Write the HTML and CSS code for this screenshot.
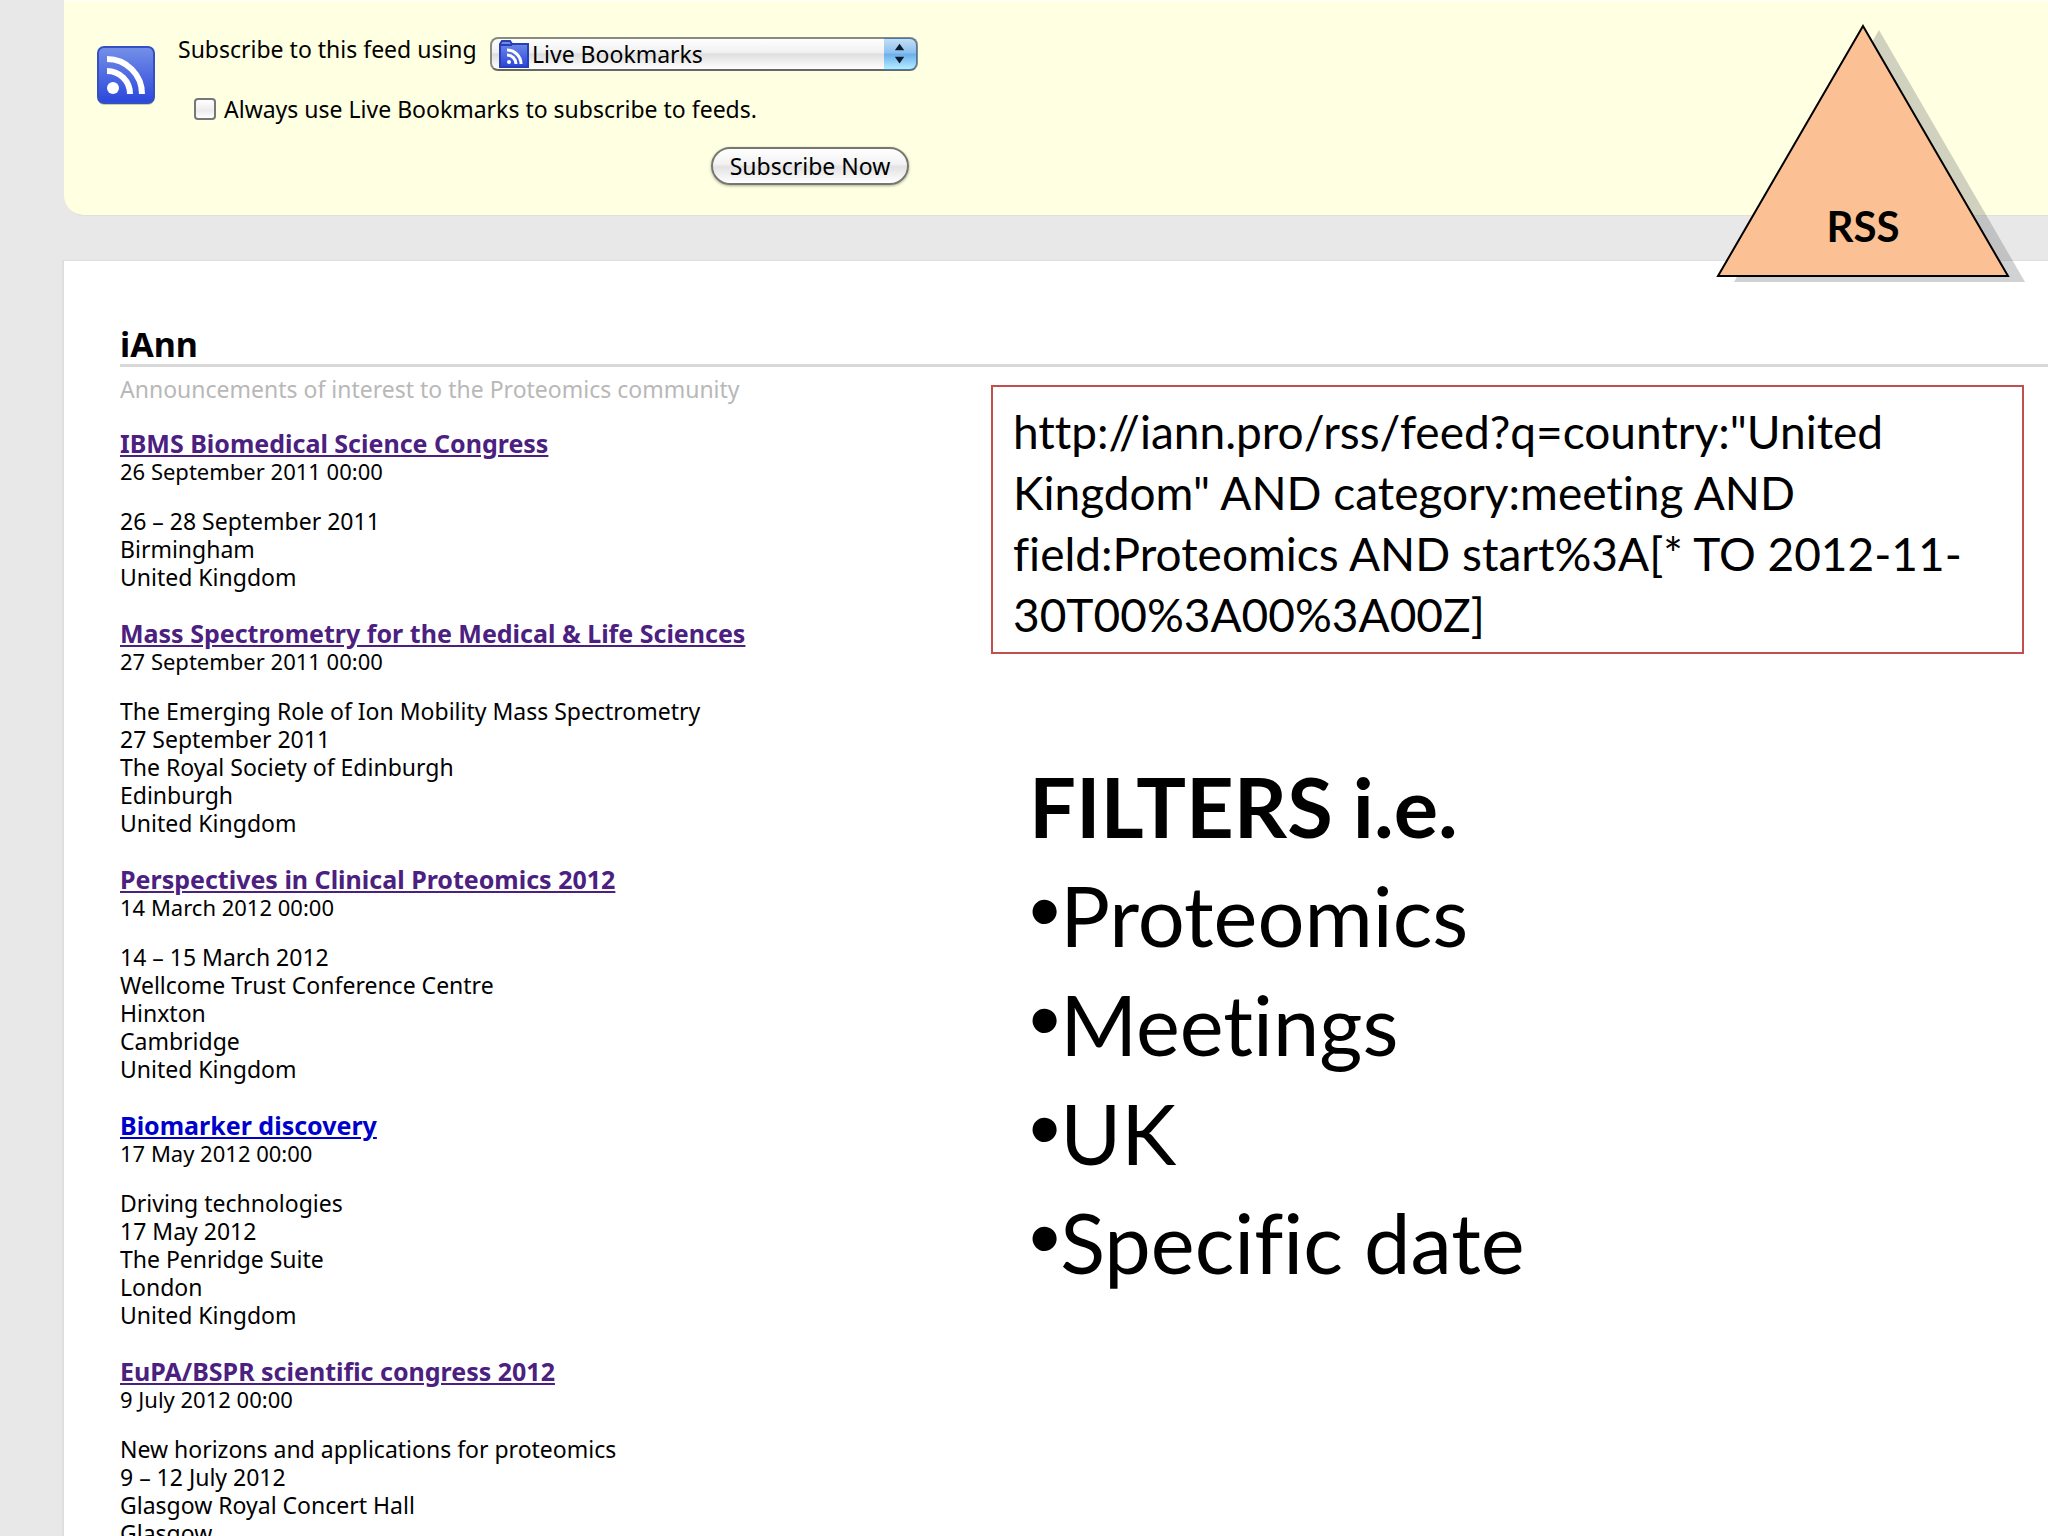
FILE: index.html
```html
<!DOCTYPE html>
<html lang="en">
<head>
  <meta charset="utf-8">
  <meta name="viewport" content="width=device-width,initial-scale=1">
  <title>iAnn</title>
  <link rel="stylesheet" href="styles.css">
</head>
<body>

<!-- subscribe bar -->
<header class="subscribe">
  <svg class="feed-icon" viewBox="0 0 60 60" aria-hidden="true">
    <defs>
      <linearGradient id="blue" x1="0" y1="0" x2="0" y2="1">
        <stop offset="0" stop-color="#7590e8"/>
        <stop offset="1" stop-color="#2a46dc"/>
      </linearGradient>
    </defs>
    <rect x="2" y="3" width="56" height="56" rx="6" fill="#9a9a88" opacity=".5"/>
    <rect x="2" y="1" width="56" height="56" rx="6" fill="url(#blue)" stroke="#3550c0" stroke-width="2"/>
    <circle cx="17" cy="42" r="6" fill="#fff"/>
    <path d="M11 25a23 23 0 0 1 23 23M11 13a35 35 0 0 1 35 35" fill="none" stroke="#fff" stroke-width="6"/>
  </svg>
  <form class="subscribe-form">
    <div class="row">
      <label for="reader">Subscribe to this feed using</label>
      <div class="picker">
        <select id="reader">
          <option>Live Bookmarks</option>
        </select>
        <svg class="folder" viewBox="0 0 30 28" aria-hidden="true">
          <path d="M1 27V4l2-3h8l2 3h16v23z" fill="url(#blue)" stroke="#2b3fb4" stroke-width="2"/>
          <path d="M1 5h12" stroke="#2b3fb4" stroke-width="2"/>
          <circle cx="10" cy="22" r="2" fill="#fff"/>
          <path d="M8 15a9 9 0 0 1 9 9M8 10a14 14 0 0 1 14 14" fill="none" stroke="#fff" stroke-width="3"/>
        </svg>
        <svg class="arrows" viewBox="0 0 33 32" aria-hidden="true">
          <path d="M11 12l5-7 5 7zM11 19l5 7 5-7z" fill="#0c1a2c"/>
        </svg>
      </div>
    </div>
    <div class="row always">
      <input type="checkbox" id="always">
      <label for="always">Always use Live Bookmarks to subscribe to feeds.</label>
    </div>
    <button type="button">Subscribe Now</button>
  </form>
</header>

<!-- feed contents -->
<main class="page">
  <h1>iAnn</h1>
  <div class="columns">
    <div class="feed">
      <p class="tagline">Announcements of interest to the Proteomics community</p>

      <article>
        <h2><a href="#ibms">IBMS Biomedical Science Congress</a></h2>
        <time>26 September 2011 00:00</time>
        <p>26 – 28 September 2011<br>Birmingham<br>United Kingdom</p>
      </article>

      <article>
        <h2><a href="#mass-spec">Mass Spectrometry for the Medical &amp; Life Sciences</a></h2>
        <time>27 September 2011 00:00</time>
        <p>The Emerging Role of Ion Mobility Mass Spectrometry<br>27 September 2011<br>The Royal Society of Edinburgh<br>Edinburgh<br>United Kingdom</p>
      </article>

      <article>
        <h2><a href="#perspectives">Perspectives in Clinical Proteomics 2012</a></h2>
        <time>14 March 2012 00:00</time>
        <p>14 – 15 March 2012<br>Wellcome Trust Conference Centre<br>Hinxton<br>Cambridge<br>United Kingdom</p>
      </article>

      <article>
        <h2><a class="unread" href="#biomarker">Biomarker discovery</a></h2>
        <time>17 May 2012 00:00</time>
        <p>Driving technologies<br>17 May 2012<br>The Penridge Suite<br>London<br>United Kingdom</p>
      </article>

      <article>
        <h2><a href="#eupa">EuPA/BSPR scientific congress 2012</a></h2>
        <time>9 July 2012 00:00</time>
        <p>New horizons and applications for proteomics<br>9 – 12 July 2012<br>Glasgow Royal Concert Hall<br>Glasgow</p>
      </article>
    </div>

    <aside class="notes">
      <p class="query">http://iann.pro/rss/feed?q=country:"United Kingdom" AND category:meeting AND field:Proteomics AND start%3A[* TO 2012-11-30T00%3A00%3A00Z]</p>
      <div class="filters">
        <h2>FILTERS i.e.</h2>
        <ul>
          <li>Proteomics</li>
          <li>Meetings</li>
          <li>UK</li>
          <li>Specific date</li>
        </ul>
      </div>
    </aside>
  </div>
</main>

<!-- RSS marker, lies over both panels -->
<div class="badge">
  <svg viewBox="0 0 312 262" aria-hidden="true">
    <path d="M163 6l146 252H18z" fill="#6e7378" opacity=".32"/>
    <path d="M147 2l145 250H2z" fill="#fbc093" stroke="#000" stroke-width="2"/>
  </svg>
  <span>RSS</span>
</div>

</body>
</html>
```
FILE: styles.css
```css
* {box-sizing:border-box}
body {margin:0;height:100vh;overflow:hidden;position:relative;background:#e8e8e8;
      font:23px/28px "Noto Sans", "Open Sans", sans-serif;color:#000}
h1, h2, p, ul {margin:0;padding:0}

/* subscribe bar */
.subscribe {display:flex;gap:22px;margin-left:64px;padding:33px 0 30px 32px;
            background:#ffffe1;border-top:2px solid #fffff4;
            border-bottom:1px solid #e0e0d4;border-bottom-left-radius:20px}
.feed-icon {width:60px;height:60px;margin-top:11px}
.subscribe-form {display:flex;flex-direction:column;width:740px}
.row    {display:flex;justify-content:space-between}
.picker {position:relative;width:428px;margin-top:2px}
select  {display:block;appearance:none;width:100%;height:34px;padding:0 40px;
         border:2px solid #8a8a80;border-bottom-color:#666;border-radius:8px;
         background:linear-gradient(#fff,#f0f0f0 45%,#dedede 50%,#fff);
         font:inherit;color:#000}
.folder {position:absolute;left:9px;top:3px;width:30px;height:28px}
.arrows {position:absolute;right:1px;top:1px;width:33px;height:32px;
         background:linear-gradient(#c4def6,#8cc0ee 45%,#6cb0ec 52%,#b4ecff);
         border:1px solid #4a78a8;border-left:0;border-radius:0 7px 7px 0;pointer-events:none}
.always {justify-content:flex-start;align-items:center;gap:8px;margin:24px 0 24px 16px}
.always input {appearance:none;width:22px;height:22px;margin:0;border:2px solid #777;
               border-radius:4px;background:linear-gradient(#fff,#ececec 60%,#fff)}
button  {align-self:flex-end;width:198px;height:38px;margin-right:9px;padding:0;
         border:2px solid #77776f;border-radius:19px;
         background:linear-gradient(#fff,#f2f2f2 45%,#e2e2e2 52%,#fff);
         box-shadow:0 1px 3px #0005;font:inherit;line-height:32px;color:#000}

/* feed */
.page   {margin:44px 0 0 64px;padding:65px 0 0 56px;background:#fff;
         border-top:1px solid #dedede;box-shadow:-2px 0 0 #dedede}
.page h1 {padding-bottom:2px;border-bottom:3px solid #d8d8d8;font-size:34px;line-height:36px}
.columns {display:grid;grid-template-columns:871fr 1033fr;padding-right:24px}
.tagline {margin:8px 0 26px;color:#b8b8b8}
article {margin-bottom:28px}
article h2 {font-size:25px;line-height:28px}
article a  {color:#4b2080}
article a.unread {color:#0000cc}
time    {display:block;margin-bottom:22px;font-size:22px}

/* notes beside the feed */
.notes  {padding-top:18px;font-family:Lato, sans-serif;font-variant-ligatures:none}
.query  {padding:14px 20px 7px;border:2px solid #c0504d;font-size:46px;line-height:61px}
.filters {margin:98px 0 0 38px;font-size:83px;line-height:109px}
.filters h2 {font-size:83px}
.filters ul {list-style:none}
.filters li::before {content:"•";font:89px/0 "Liberation Sans", sans-serif;vertical-align:6px}

/* RSS marker */
.badge  {position:absolute;right:20px;top:24px;width:312px;height:262px}
.badge svg  {display:block;width:100%}
.badge span {position:absolute;left:0;bottom:35px;width:294px;text-align:center;
             font:bold 42px/50px Lato, sans-serif}
```
